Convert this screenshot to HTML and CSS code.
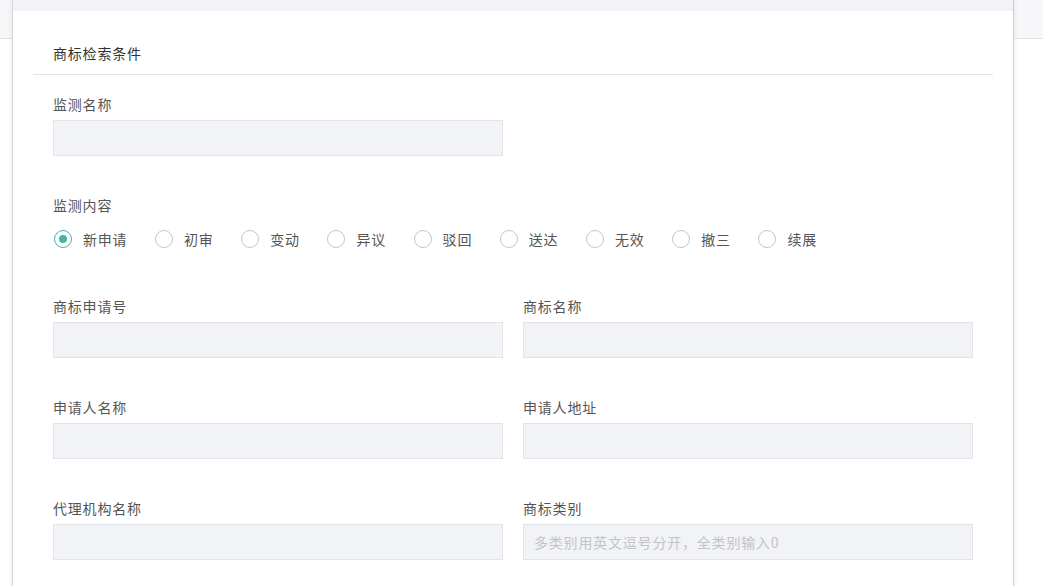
FILE: index.html
```html
<!DOCTYPE html>
<html lang="zh">
<head>
<meta charset="utf-8">
<title>商标检索条件</title>
<link rel="stylesheet" href="styles.css">
</head>
<body>
<div class="page-header"></div>
<div class="modal">
  <div class="modal-top"></div>
  <div class="modal-body">
    <div class="section-title">商标检索条件</div>
    <div class="form">
      <div class="field">
        <div class="label">监测名称</div>
        <div class="input"></div>
      </div>
      <div class="field content-field">
        <div class="label">监测内容</div>
        <div class="radios">
          <span class="radio checked"><span class="dot"></span>新申请</span>
          <span class="radio"><span class="dot"></span>初审</span>
          <span class="radio"><span class="dot"></span>变动</span>
          <span class="radio"><span class="dot"></span>异议</span>
          <span class="radio"><span class="dot"></span>驳回</span>
          <span class="radio"><span class="dot"></span>送达</span>
          <span class="radio"><span class="dot"></span>无效</span>
          <span class="radio"><span class="dot"></span>撤三</span>
          <span class="radio"><span class="dot"></span>续展</span>
        </div>
      </div>
      <div class="grid">
        <div class="field">
          <div class="label">商标申请号</div>
          <div class="input"></div>
        </div>
        <div class="field">
          <div class="label">商标名称</div>
          <div class="input"></div>
        </div>
        <div class="field">
          <div class="label">申请人名称</div>
          <div class="input"></div>
        </div>
        <div class="field">
          <div class="label">申请人地址</div>
          <div class="input"></div>
        </div>
        <div class="field">
          <div class="label">代理机构名称</div>
          <div class="input"></div>
        </div>
        <div class="field">
          <div class="label">商标类别</div>
          <div class="input placeholder">多类别用英文逗号分开，全类别输入0</div>
        </div>
      </div>
    </div>
  </div>
</div>
</body>
</html>
```

FILE: styles.css
```css
html, body {
  margin: 0;
  padding: 0;
  background: #ffffff;
  font-family: "Noto Sans CJK SC", "Noto Sans", sans-serif;
  overflow: hidden;
  height: 586px;
}
.page-header {
  height: 38px;
  background: #f7f7f9;
  border-bottom: 1px solid #e3e3e6;
}
.modal {
  position: absolute;
  left: 12px;
  top: 0;
  width: 1000px;
  height: 600px;
  background: #ffffff;
  border-left: 1px solid #d6d6d9;
  border-right: 1px solid #cfcfd2;
  box-shadow: 0 0 6px rgba(0, 0, 0, 0.08);
}
.modal-top {
  height: 11px;
  background: #f3f3f7;
}
.modal-body {
  padding: 0 20px;
}
.section-title {
  padding: 32px 20px 11px;
  font-size: 14px;
  letter-spacing: 0.8px;
  line-height: 20px;
  color: #333333;
  border-bottom: 1px solid #e3e3e3;
}
.form {
  padding: 19px 20px 0;
}
.field {
  display: flex;
  flex-direction: column;
  width: 450px;
}
.label {
  font-size: 14px;
  letter-spacing: 0.8px;
  line-height: 20px;
  color: #555555;
  margin-bottom: 6px;
}
.input {
  box-sizing: border-box;
  height: 36px;
  background: #f2f3f7;
  border: 1px solid #e3e4e8;
  padding: 0 10px;
  font-size: 14px;
  letter-spacing: 0.8px;
  line-height: 34px;
  color: #333;
}
.input.placeholder {
  color: #c2c3c6;
}
.content-field {
  margin-top: 39px;
  width: auto;
}
.content-field .label {
  margin-bottom: 14px;
}
.radios {
  display: flex;
  align-items: center;
  height: 20px;
}
.radio {
  display: flex;
  align-items: center;
  font-size: 14px;
  letter-spacing: 0.8px;
  line-height: 20px;
  color: #555555;
  margin-right: 26.6px;
}
.dot {
  box-sizing: border-box;
  width: 18px;
  height: 18px;
  border: 1px solid #c6c6c6;
  border-radius: 50%;
  margin-right: 11px;
  margin-left: 1px;
  position: relative;
}
.radio.checked .dot {
  border-color: #45b5a6;
}
.radio.checked .dot::after {
  content: "";
  position: absolute;
  left: 4px;
  top: 4px;
  width: 8px;
  height: 8px;
  border-radius: 50%;
  background: #45b5a6;
}
.grid {
  display: grid;
  grid-template-columns: 450px 450px;
  column-gap: 20px;
  row-gap: 39px;
  margin-top: 47px;
}
```
